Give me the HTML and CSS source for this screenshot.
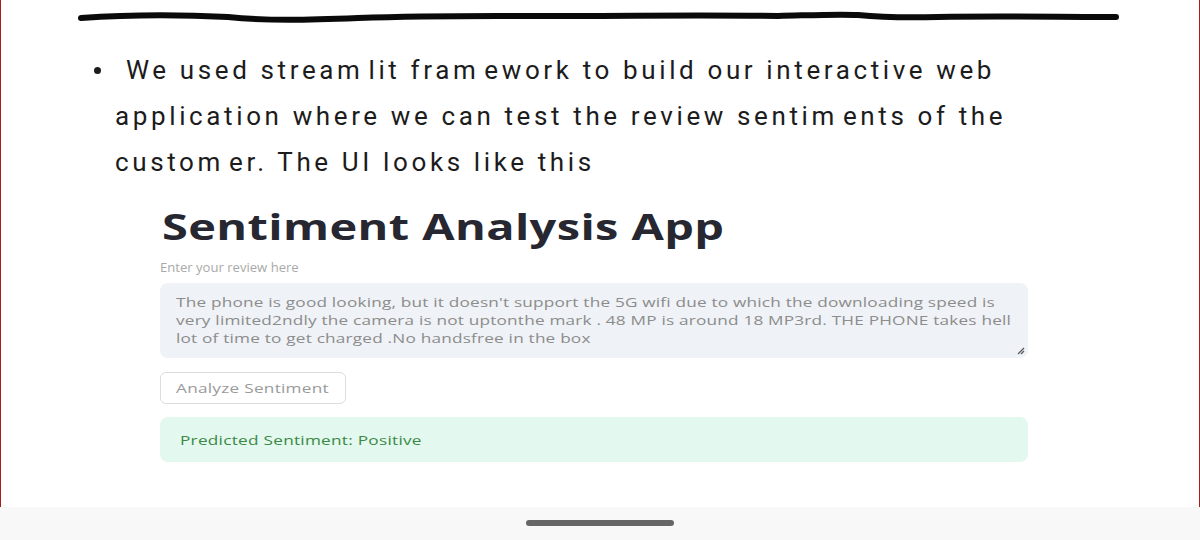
FILE: index.html
```html
<!DOCTYPE html>
<html lang="en">
<head>
<meta charset="utf-8">
<title>Sentiment Analysis App</title>
<link rel="stylesheet" href="styles.css">
</head>
<body>
<div class="page">
  <main class="doc">
    <svg class="scribble" width="1044" height="16" viewBox="0 0 1044 16">
      <path d="M3 8 C 60 4, 110 5, 150 7 C 190 11, 230 10, 280 8 C 360 5, 420 6, 480 6 C 560 6, 620 5, 700 6 C 740 5, 760 4, 780 5 C 800 7, 820 8, 860 7 C 920 6, 980 7, 1038 7" fill="none" stroke="#0a0a0a" stroke-width="6" stroke-linecap="round"/>
    </svg>
    <p class="bullet"><span class="dot"></span>We used strea<span class="m">m</span>lit fra<span class="m">m</span>ework to build our interactive web application where we can test the review senti<span class="m">m</span>ents of the custo<span class="m">m</span>er. The UI looks like this</p>
    <section class="app">
      <h1 class="title"><span class="wide-t">Sentiment Analysis App</span></h1>
      <div class="label"><span class="wide-l">Enter your review here</span></div>
      <div class="textarea">
        <span class="wide">The phone is good looking, but it doesn't support the 5G wifi due to which the downloading speed is</span><br>
        <span class="wide">very limited2ndly the camera is not uptonthe mark . 48 MP is around 18 MP3rd. THE PHONE takes hell</span><br>
        <span class="wide">lot of time to get charged .No handsfree in the box</span>
        <svg class="grip" width="8" height="8" viewBox="0 0 8 8"><path d="M1 7 L7 1 M4 7 L7 4" stroke="#555" stroke-width="1.2"/></svg>
      </div>
      <button class="btn"><span class="wide">Analyze Sentiment</span></button>
      <div class="success"><span class="wide">Predicted Sentiment: Positive</span></div>
    </section>
  </main>
  <footer class="nav"><span class="pill"></span></footer>
</div>
</body>
</html>
```
FILE: styles.css
```css
* { box-sizing: border-box; }
html, body { margin: 0; padding: 0; background: #fff; }
.page {
  width: 1200px;
  height: 540px;
  display: flex;
  flex-direction: column;
  overflow: hidden;
}
.doc {
  flex: 1;
  border-left: 1px solid #a31f1f;
  border-right: 1px solid #a31f1f;
  padding-top: 10px;
}
.scribble {
  display: block;
  margin-left: 77px;
}
.bullet {
  margin: 21px 0 0 0;
  padding-left: 114px;
  width: 1100px;
  font-family: Roboto, "Liberation Sans", sans-serif;
  font-size: 26px;
  line-height: 46px;
  letter-spacing: 3.62px;
  color: #1c1c1c;
}
.bullet .m { margin-right: 5px; }
.dot {
  display: inline-block;
  width: 7px;
  height: 7px;
  border-radius: 50%;
  background: #1c1c1c;
  margin-left: -21px;
  margin-right: 25px;
  vertical-align: 5px;
}
.app {
  margin-left: 159px;
  width: 868px;
  font-family: "Open Sans", "Noto Sans", sans-serif;
}
.wide, .wide-t, .wide-l {
  display: inline-block;
  white-space: nowrap;
  transform-origin: left center;
}
.wide { transform: scaleX(1.285); }
.wide-t { transform: scaleX(1.34); }
.wide-l { transform: scaleX(1.09); }
.title {
  margin: 20px 0 0 2px;
  font-size: 35px;
  font-weight: 700;
  line-height: 44px;
  color: #262730;
  letter-spacing: 0.3px;
}
.label {
  margin-top: 11px;
  font-size: 12px;
  line-height: 16px;
  color: #a9a9a9;
}
.textarea {
  position: relative;
  margin-top: 7px;
  height: 75px;
  background: #eff2f6;
  border-radius: 8px;
  padding: 10px 16px;
  font-size: 13.4px;
  line-height: 18px;
  color: #8c8c8c;
  letter-spacing: 0.15px;
}
.grip { position: absolute; right: 3px; bottom: 3px; }
.btn {
  display: block;
  margin-top: 14px;
  width: 186px;
  height: 32px;
  padding: 0 15px;
  text-align: left;
  background: #fff;
  border: 1px solid #dcdcdc;
  border-radius: 6px;
  font-family: "Open Sans", "Noto Sans", sans-serif;
  font-size: 13.4px;
  color: #9a9a9a;
  letter-spacing: 0.2px;
}
.success {
  margin-top: 13px;
  height: 45px;
  background: #e3f8ee;
  border-radius: 8px;
  padding: 0 20px;
  display: flex;
  align-items: center;
  font-size: 13.4px;
  color: #3c8845;
  letter-spacing: 0.2px;
}
.nav {
  height: 33px;
  background: #f8f8f8;
  display: flex;
  justify-content: center;
  padding-top: 13px;
}
.pill {
  width: 148px;
  height: 6px;
  border-radius: 3px;
  background: #666;
}
```
